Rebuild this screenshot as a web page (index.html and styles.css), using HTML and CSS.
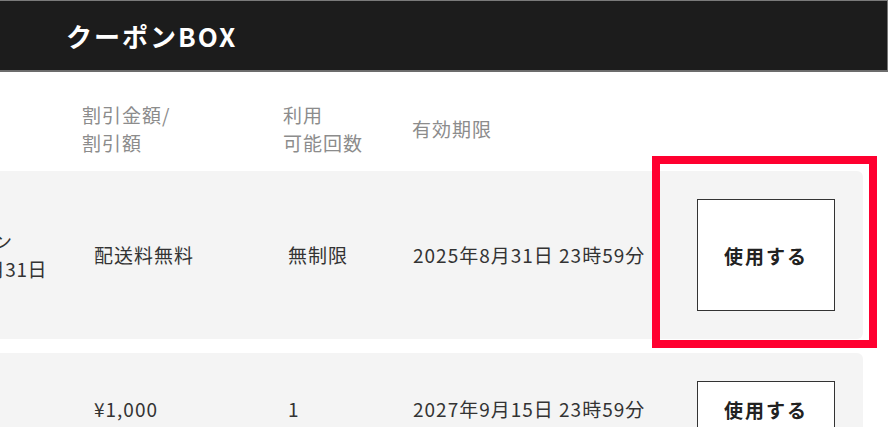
FILE: index.html
```html
<!DOCTYPE html>
<html lang="ja">
<head>
<meta charset="utf-8">
<title>クーポンBOX</title>
<link rel="stylesheet" href="styles.css">
</head>
<body>
<div class="page">
  <header class="topbar">
    <h1 class="title">クーポンBOX</h1>
  </header>

  <div class="thead">
    <div class="th">クーポン名</div>
    <div class="th">割引金額/<br>割引額</div>
    <div class="th">利用<br>可能回数</div>
    <div class="th">有効期限</div>
    <div class="th"></div>
  </div>

  <div class="list">
    <div class="card">
      <div class="name">
        <span class="line">【会員限定】</span>
        <span class="line">全品送料無料クーポン</span>
        <span class="line line-tight">有効期限：2025年8月31日</span>
        <span class="line">※一部商品除く</span>
      </div>
      <div class="cell">配送料無料</div>
      <div class="cell">無制限</div>
      <div class="cell">2025年8月31日 23時59分</div>
      <button class="use" type="button">使用する</button>
    </div>

    <div class="card">
      <div class="name">
        <span class="line">新規会員限定</span>
        <span class="line">1,000円クーポン</span>
      </div>
      <div class="cell">¥1,000</div>
      <div class="cell">1</div>
      <div class="cell">2027年9月15日 23時59分</div>
      <button class="use" type="button">使用する</button>
    </div>
  </div>

  <div class="highlight"></div>
</div>
</body>
</html>
```

FILE: styles.css
```css
* {
  box-sizing: border-box;
}

html, body {
  margin: 0;
  padding: 0;
  background: #ffffff;
}

body {
  font-family: "Noto Sans CJK JP", "Noto Sans", sans-serif;
  color: #333333;
}

.page {
  position: relative;
  width: 888px;
  height: 427px;
  overflow: hidden;
}

.topbar {
  height: 72px;
  background: #1c1c1c;
  border-top: 1px solid #7a7a7a;
  border-bottom: 2px solid #6c6c6c;
  border-right: 1px solid #777777;
  display: flex;
  align-items: center;
  padding-left: 66px;
}

.title {
  margin: 0;
  font-size: 26px;
  font-weight: 700;
  letter-spacing: 2px;
  color: #ffffff;
  line-height: 1;
}

.thead {
  margin-left: -220px;
  width: 1083px;
  display: grid;
  grid-template-columns: 274px 201px 129px 1fr 138px;
  align-items: center;
  padding: 29px 28px 14px;
  font-size: 19px;
  letter-spacing: 1px;
  line-height: 28px;
  color: #8c8c8c;
}

.list {
  margin-left: -220px;
  width: 1083px;
  display: flex;
  flex-direction: column;
  gap: 14px;
}

.card {
  display: grid;
  grid-template-columns: 286px 194px 125px 284px 138px;
  align-items: center;
  padding: 28px;
  background: #f4f4f4;
  border-radius: 6px;
  font-size: 19px;
  letter-spacing: 1px;
  line-height: 28px;
  color: #333333;
}

.name {
  padding-left: 5px;
  display: flex;
  flex-direction: column;
  white-space: nowrap;
}

.line {
  display: block;
}

.line-tight {
  letter-spacing: 0.55px;
}

.cell {
  white-space: nowrap;
}

.use {
  align-self: stretch;
  background: #ffffff;
  border: 1px solid #333333;
  border-radius: 0;
  font-family: "Noto Sans CJK JP", "Noto Sans", sans-serif;
  font-size: 19px;
  font-weight: 700;
  letter-spacing: 2px;
  color: #222222;
  padding: 0;
  cursor: pointer;
}

.highlight {
  position: absolute;
  left: 652px;
  top: 156px;
  width: 225px;
  height: 192px;
  border: 8px solid #ff0030;
  pointer-events: none;
}
```
